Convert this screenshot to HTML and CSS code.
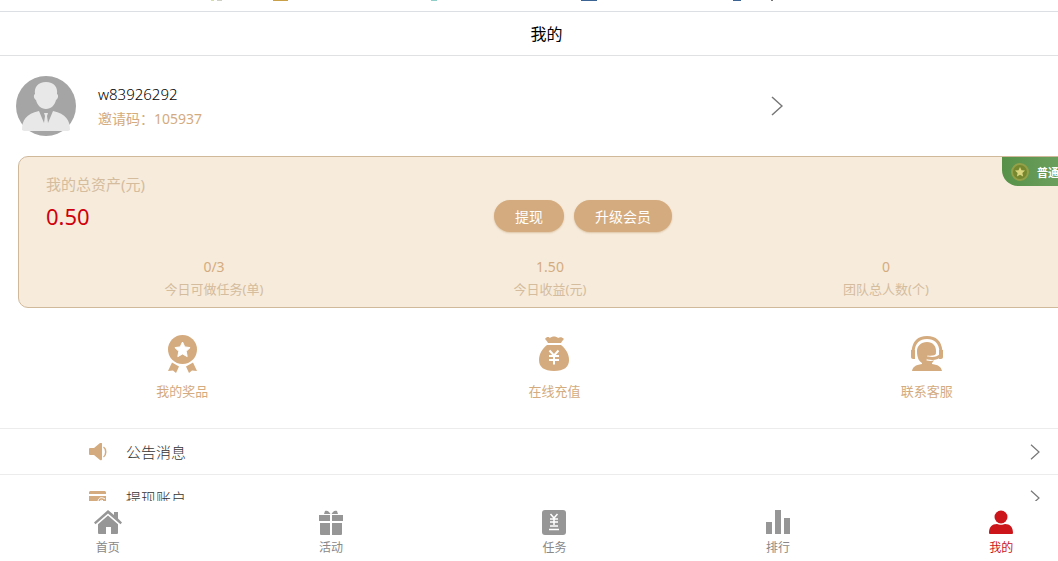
FILE: index.html
```
<!DOCTYPE html>
<html lang="zh-CN">
<head>
  <meta charset="utf-8">
  <meta name="viewport" content="width=device-width, initial-scale=1">
  <title>我的</title>
  <link rel="stylesheet" href="styles.css">
</head>
<body>
  <div class="top-strip">
    <svg width="100%" height="2" aria-hidden="true">
      <rect x="211" width="3" height="1" fill="#d5dcae"/>
      <rect x="217" width="5" height="1" fill="#cfcfc4"/>
      <rect x="273" width="15" height="1" fill="#c9a047"/>
      <rect x="431" width="6" height="1" fill="#8fcfc8"/>
      <rect x="581" width="16" height="1" fill="#3b6494"/>
      <rect x="733" width="8" height="1" fill="#3b6494"/>
      <rect x="771" width="2" height="1" fill="#777"/>
    </svg>
  </div>

  <main class="page">
    <h1 class="title">我的</h1>

    <a href="#" class="profile">
      <svg class="avatar" viewBox="0 0 60 60" aria-hidden="true">
        <circle cx="30" cy="30" r="30" fill="#a5a5a5"/>
        <path d="M30 6c8 0 12 5 11 12 2 1 1 5-1 6-1 5-5 9-10 9s-9-4-10-9c-2-1-3-5-1-6C18 11 22 6 30 6z" fill="#e8e8e8"/>
        <path d="M6 54c0-10 4-16 17-19l5 12 1-7-1-3h4l-1 3 1 7 5-12c13 3 17 9 17 19l-2 1H8z" fill="#e8e8e8"/>
      </svg>
      <span class="profile-text">
        <span class="name">w83926292</span>
        <span class="code">邀请码<span class="colon">：</span>105937</span>
      </span>
      <svg class="arrow arrow-big" viewBox="0 0 12 20" aria-hidden="true"><path d="M1 1l10 9-10 9"/></svg>
    </a>

    <section class="card">
      <div class="badge">
        <svg width="18" height="18" viewBox="0 0 18 18" aria-hidden="true">
          <circle cx="9" cy="9" r="8" fill="#76882f" stroke="#93a047" stroke-width="2"/>
          <path d="M9 4l1.500 3.200 3.500.4-2.600 2.400.7 3.500L9 11.800l-3.100 1.700.7-3.500L4 7.600l3.500-.4z" fill="#d9d67e"/>
        </svg>
        <span>普通会员</span>
      </div>
      <div class="card-label">我的总资产(元)</div>
      <div class="balance">
        <span class="amount">0.50</span>
        <div class="actions">
          <button type="button">提现</button>
          <button type="button">升级会员</button>
        </div>
      </div>
      <div class="stats">
        <div><b>0/3</b><span>今日可做任务(单)</span></div>
        <div><b>1.50</b><span>今日收益(元)</span></div>
        <div><b>0</b><span>团队总人数(个)</span></div>
      </div>
    </section>

    <section class="shortcuts">
      <a href="#">
        <svg viewBox="0 0 40 40" aria-hidden="true">
          <path d="M10 28.500l7 4L14 39l-3-2.500-5 .5zM31 28.500l-7 4 3 6.500 3-2.500 5 .5z"/>
          <circle cx="20.500" cy="15.500" r="14.500"/>
          <path d="M20.500 8l2.300 4.900 5.300.7-3.900 3.700 1 5.300-4.700-2.600-4.700 2.600 1-5.300-3.900-3.700 5.300-.7z" fill="#fff" stroke="#fff" stroke-linejoin="round"/>
        </svg>
        我的奖品
      </a>
      <a href="#">
        <svg viewBox="0 0 40 40" aria-hidden="true">
          <path d="M11 5c2-3 4-2 5-1 2-2 6-2 8 0 2-1 4-1 6 1-1 1-2 2-3 4H14c-1-2-2-3-3-4z"/>
          <path d="M13 11h14c5 4 8 9 8 15 0 7-5 11-15 11S5 33 5 26c0-6 3-11 8-15z"/>
          <path d="M15.500 16.500l4.500 5 4.500-5M15 22h10M15 26h10M20 21.500v9" stroke="#fff" stroke-width="2" fill="none"/>
        </svg>
        在线充值
      </a>
      <a href="#">
        <svg viewBox="0 0 40 40" aria-hidden="true">
          <path d="M6 20v-3C7 8 12 3.500 20 3.500S33 8 34 17v3" fill="none" stroke="#d4ab7e" stroke-width="3"/>
          <path d="M4 16h4v9H6c-1 0-2-1-2-2zM32 16h4v7c0 1-1 2-2 2h-2z"/>
          <path d="M20 8c6 0 9 4 9 9 0 7-2 10-4 12v1c7 1 9 3 10 7H5c1-4 3-6 10-7v-1c-3-2-5-5-5-12 0-5 4-9 10-9z"/>
          <path d="M20 24c5 1 9 0 12-3" stroke="#fff" stroke-width="5" fill="none"/>
          <path d="M21 24c5 1 10 0 13-3" stroke="#d4ab7e" stroke-width="3" stroke-linecap="round" fill="none"/>
        </svg>
        联系客服
      </a>
    </section>

    <nav class="menu">
      <a href="#">
        <svg class="menu-icon" viewBox="0 0 18 18" aria-hidden="true">
          <path d="M1 5h4l6-5q2-1 2 1v15q0 2-2 1l-6-5H1q-1 0-1-1V6q0-1 1-1z"/>
          <path d="M14.500 4c3 2 3 8 0 10" fill="none" stroke="#d4ab7e" stroke-width="1.500"/>
        </svg>
        <span>公告消息</span>
        <svg class="arrow" viewBox="0 0 12 20" aria-hidden="true"><path d="M1 1l10 9-10 9"/></svg>
      </a>
      <a href="#">
        <svg class="menu-icon" viewBox="0 0 18 18" aria-hidden="true">
          <path d="M1 2h15l1 1v2H0V3zM0 7h17v10H0z"/>
          <path d="M9 12c1-4 4-4 7-2M11 12l2-1 2 2" fill="none" stroke="#fff"/>
        </svg>
        <span>提现账户</span>
        <svg class="arrow" viewBox="0 0 12 20" aria-hidden="true"><path d="M1 1l10 9-10 9"/></svg>
      </a>
    </nav>
  </main>

  <nav class="tabbar">
    <a href="#">
      <svg viewBox="0 0 28 28" aria-hidden="true">
        <path d="M14 2l6 5V4h4v6.500l4 4-1.500 1.800L14 5.500 1.500 16.300 0 14.500z"/>
        <path d="M14 7.500l10 8.700V25q0 1-1 1h-6v-7h-5v7H5q-1 0-1-1v-8.800z"/>
      </svg>
      首页
    </a>
    <a href="#">
      <svg viewBox="0 0 28 28" aria-hidden="true">
        <path d="M13.500 6H7l1-3c3-1 4 1 5.500 3zM14.500 6H21l-1-3c-3-1-4 1-5.500 3z"/>
        <path d="M2 7h11v6H2zM15 7h11v6H15zM3 15h10v12H4q-1 0-1-1zM15 15h10v11q0 1-1 1h-9z"/>
      </svg>
      活动
    </a>
    <a href="#">
      <svg viewBox="0 0 28 28" aria-hidden="true">
        <rect x="2" y="2" width="24" height="25" rx="3"/>
        <path d="M10.500 6l3.500 4 3.500-4M10 11h8M10 14h8M14 10v7M10 18h8M9 21.500h10" fill="none" stroke="#fff" stroke-width="1.500"/>
      </svg>
      任务
    </a>
    <a href="#">
      <svg viewBox="0 0 28 28" aria-hidden="true">
        <path d="M2 14h6v12H2zM11 2h6v24h-6zM20 10h6v16h-6z"/>
      </svg>
      排行
    </a>
    <a href="#" class="active">
      <svg viewBox="0 0 28 28" aria-hidden="true">
        <circle cx="14" cy="9" r="6.500"/>
        <path d="M2 25c0-6 3-9 8-9 2 1 6 1 8 0 5 0 8 3 8 9q0 1-1 1H3q-1 0-1-1z"/>
      </svg>
      我的
    </a>
  </nav>
</body>
</html>
```

FILE: styles.css
```
* {
  box-sizing: border-box;
}
body {
  margin: 0;
  height: 100vh;
  display: flex;
  flex-direction: column;
  overflow: hidden;
  background: #fff;
  color: #000;
  font-family: "Noto Sans", "Noto Sans CJK SC", sans-serif;
  font-size: 13px;
}
a {
  color: inherit;
  text-decoration: none;
}
svg {
  display: block;
  flex: none;
}
.top-strip {
  flex: none;
  height: 12px;
  border-bottom: 1px solid #dcdfe3;
}

/* the page is a little wider than the window */
.page {
  flex: 1;
  min-height: 0;
  overflow: hidden;
  margin: 0 -55px 0 -4px;
}
.title {
  margin: 0;
  height: 44px;
  padding-right: 16px;
  border-bottom: 1px solid #dfe1e3;
  font-size: 16px;
  font-weight: 400;
  line-height: 44px;
  text-align: center;
}

.profile {
  display: flex;
  align-items: center;
  width: 70.5%;
  height: 100px;
  padding-left: 20px;
}
.avatar {
  width: 60px;
  height: 60px;
  margin-right: 22px;
}
.profile-text {
  flex: 1;
}
.name,
.code {
  display: block;
  line-height: 24px;
}
.name {
  font-size: 15px;
  font-weight: 300;
}
.code {
  color: #d4ab7e;
  font-size: 14px;
}
.colon {
  font-family: "Noto Sans CJK TC", sans-serif;
}
.arrow {
  width: 10px;
  height: 16px;
  fill: none;
  stroke: #777;
  stroke-width: 1.5;
}
.arrow-big {
  width: 12px;
  height: 20px;
}

.card {
  position: relative;
  margin: 0 31px 0 22px;
  height: 152px;
  padding: 15px 27px 0;
  overflow: hidden;
  border: 1px solid #d0b99a;
  border-radius: 10px;
  background: #f7ebdc;
  color: #d4bc9c;
}
.badge {
  position: absolute;
  top: 0;
  right: 0;
  display: flex;
  align-items: center;
  gap: 8px;
  height: 29px;
  padding-left: 9px;
  border-bottom-left-radius: 16px;
  background: linear-gradient(to right, #579148, #73a466);
  color: #fff;
  font-size: 11px;
  font-weight: 700;
}
.card-label {
  font-size: 15px;
  line-height: 24px;
}
.balance {
  display: grid;
  grid-template-columns: 4fr 5fr;
  align-items: center;
  height: 40px;
}
.amount {
  color: #d0000c;
  font-size: 22px;
}
.actions {
  display: flex;
  gap: 10px;
}
.actions button {
  height: 32px;
  padding: 0 21px;
  border: 0;
  border-radius: 16px;
  background: #d4ab7e;
  box-shadow: 0 1px 2px #dcc4a4;
  color: #fff;
  font: inherit;
  font-size: 14px;
}
.stats,
.shortcuts {
  display: grid;
  grid-template-columns: repeat(3, 1fr);
  text-align: center;
}
.stats {
  padding-top: 19px;
}
.stats b,
.stats span {
  display: block;
  line-height: 23px;
}
.stats b {
  color: #d4ab7e;
  font-size: 14px;
  font-weight: 400;
}

.shortcuts {
  height: 120px;
  padding-top: 26px;
  color: #d4ab7e;
}
.shortcuts a {
  line-height: 18px;
}
.shortcuts svg {
  width: 40px;
  height: 40px;
  margin: 0 auto 8px;
  fill: #d4ab7e;
}

.menu a {
  display: flex;
  align-items: center;
  height: 46px;
  padding: 0 73px 0 93px;
  border-top: 1px solid #ececec;
  color: #333;
  font-size: 15px;
  font-weight: 300;
}
.menu-icon {
  width: 18px;
  height: 18px;
  margin-right: 19px;
  fill: #d4ab7e;
}
.menu span {
  flex: 1;
}

.tabbar {
  flex: none;
  display: grid;
  grid-template-columns: repeat(5, 1fr);
  height: 60px;
  margin: 0 -55px 0 -4px;
  padding-top: 7px;
  background: #fff;
  color: #888;
  font-size: 12px;
  line-height: 20px;
  text-align: center;
}
.tabbar svg {
  width: 28px;
  height: 28px;
  margin: 0 auto 2px;
  fill: #969696;
}
.tabbar .active {
  color: #cb151b;
}
.tabbar .active svg {
  fill: #cb151b;
}
```
